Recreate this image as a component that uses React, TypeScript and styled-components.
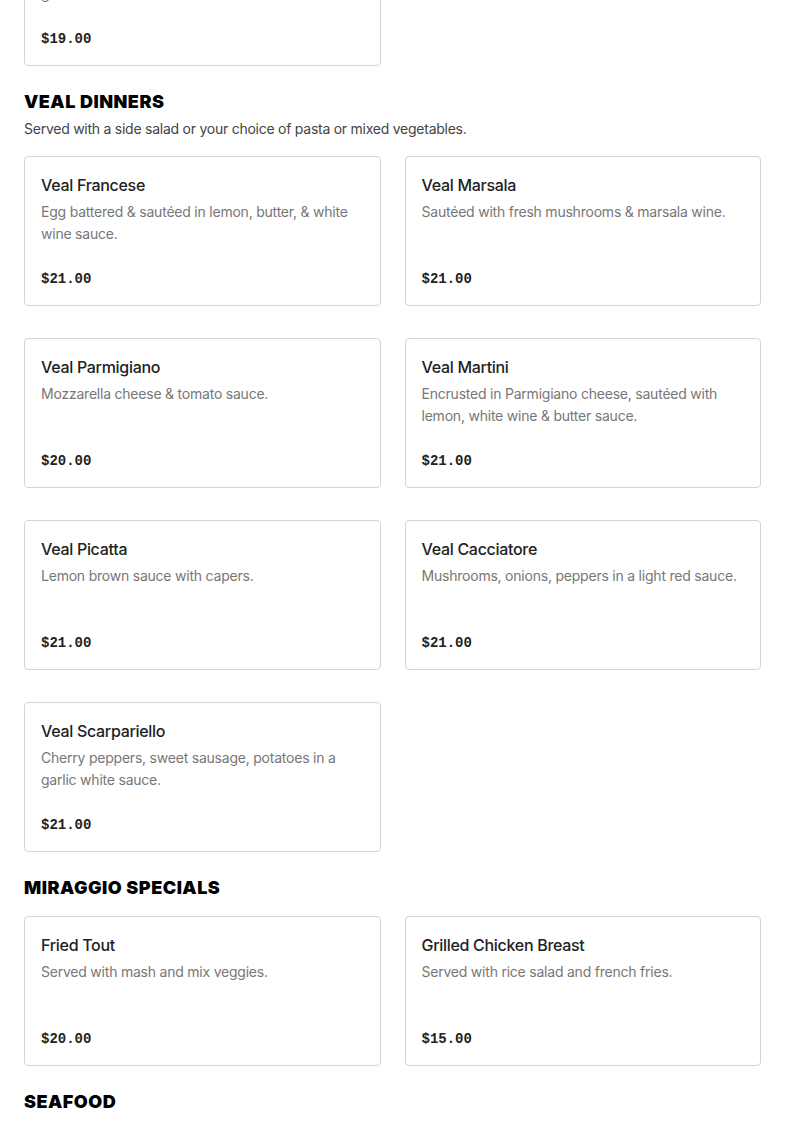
import styled, { createGlobalStyle } from "styled-components";

const GlobalStyle = createGlobalStyle`
  html, body {
    margin: 0;
    padding: 0;
    background: #fff;
    overflow: hidden;
  }
  body {
    font-family: "Inter", "Liberation Sans", sans-serif;
    color: #222;
  }
`;

type Dish = {
  name: string;
  description: string;
  price: string;
};

type Section = {
  title?: string;
  subtitle?: string;
  dishes: Dish[];
};

const sections: Section[] = [
  {
    dishes: [
      {
        name: "Chicken Scarpariello",
        description:
          "Cherry peppers, sweet sausage, potatoes in a garlic white sauce.",
        price: "$19.00",
      },
    ],
  },
  {
    title: "VEAL DINNERS",
    subtitle: "Served with a side salad or your choice of pasta or mixed vegetables.",
    dishes: [
      {
        name: "Veal Francese",
        description: "Egg battered & sautéed in lemon, butter, & white wine sauce.",
        price: "$21.00",
      },
      {
        name: "Veal Marsala",
        description: "Sautéed with fresh mushrooms & marsala wine.",
        price: "$21.00",
      },
      {
        name: "Veal Parmigiano",
        description: "Mozzarella cheese & tomato sauce.",
        price: "$20.00",
      },
      {
        name: "Veal Martini",
        description:
          "Encrusted in Parmigiano cheese, sautéed with lemon, white wine & butter sauce.",
        price: "$21.00",
      },
      {
        name: "Veal Picatta",
        description: "Lemon brown sauce with capers.",
        price: "$21.00",
      },
      {
        name: "Veal Cacciatore",
        description: "Mushrooms, onions, peppers in a light red sauce.",
        price: "$21.00",
      },
      {
        name: "Veal Scarpariello",
        description:
          "Cherry peppers, sweet sausage, potatoes in a garlic white sauce.",
        price: "$21.00",
      },
    ],
  },
  {
    title: "MIRAGGIO SPECIALS",
    dishes: [
      {
        name: "Fried Tout",
        description: "Served with mash and mix veggies.",
        price: "$20.00",
      },
      {
        name: "Grilled Chicken Breast",
        description: "Served with rice salad and french fries.",
        price: "$15.00",
      },
    ],
  },
  {
    title: "SEAFOOD",
    dishes: [],
  },
];

// page is shown scrolled part way down the menu
const Page = styled.main`
  display: flex;
  flex-direction: column;
  gap: 24px;
  padding: 0 24px;
  margin-top: -84px;
`;

const MenuSection = styled.section`
  display: flex;
  flex-direction: column;
`;

const SectionTitle = styled.h2`
  margin: 0 0 16px;
  font-family: "Inter", "Liberation Sans", sans-serif;
  font-size: 18px;
  line-height: 24px;
  font-weight: 900;
  letter-spacing: 0.5px;
  color: #000;
`;

const SectionSubtitle = styled.p`
  margin: -12px 0 16px;
  font-size: 14px;
  line-height: 22px;
  letter-spacing: -0.25px;
  color: #444;
`;

const Grid = styled.div`
  display: grid;
  grid-template-columns: 1fr 1fr;
  column-gap: 24px;
  row-gap: 32px;
`;

const Card = styled.article`
  display: flex;
  flex-direction: column;
  box-sizing: border-box;
  height: 150px;
  padding: 16px 16px 15px;
  border: 1px solid #d4d4d4;
  border-radius: 4px;
  background: #fff;
`;

const DishName = styled.h3`
  margin: 0;
  font-size: 16px;
  line-height: 24px;
  font-weight: 500;
  letter-spacing: -0.3px;
  color: #222;
`;

const DishDescription = styled.p`
  margin: 4px 0 0;
  font-size: 14px;
  line-height: 22px;
  letter-spacing: -0.22px;
  color: #777;
`;

const Price = styled.span`
  margin-top: auto;
  font-family: "Liberation Mono", "DejaVu Sans Mono", monospace;
  font-size: 14px;
  line-height: 22px;
  font-weight: 700;
  color: #222;
`;

const DishCard = ({ dish }: { dish: Dish }) => (
  <Card>
    <DishName>{dish.name}</DishName>
    <DishDescription>{dish.description}</DishDescription>
    <Price>{dish.price}</Price>
  </Card>
);

const App = () => {
  return (
    <>
      <GlobalStyle />
      <Page>
        {sections.map((section, i) => (
          <MenuSection key={i}>
            {section.title && <SectionTitle>{section.title}</SectionTitle>}
            {section.subtitle && (
              <SectionSubtitle>{section.subtitle}</SectionSubtitle>
            )}
            {section.dishes.length > 0 && (
              <Grid>
                {section.dishes.map((dish) => (
                  <DishCard key={dish.name} dish={dish} />
                ))}
              </Grid>
            )}
          </MenuSection>
        ))}
      </Page>
    </>
  );
};

export default App;
